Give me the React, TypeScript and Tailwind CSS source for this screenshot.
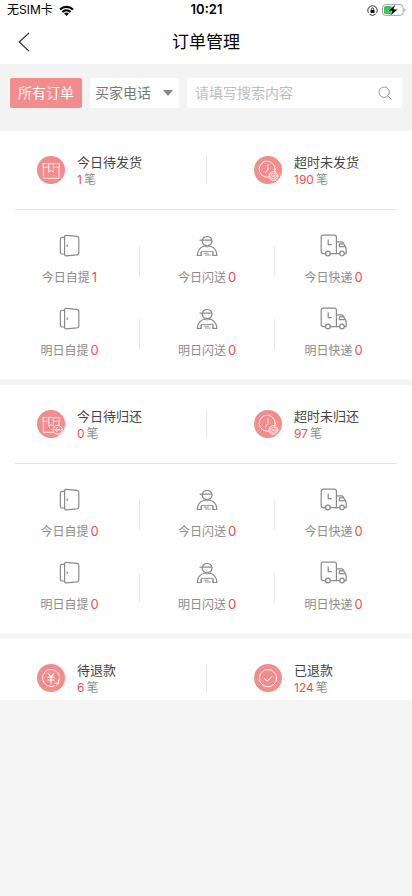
import { useState } from "react";
import type { ReactNode } from "react";

type Summary = { icon: ReactNode; title: string; count: number };
type Delivery = { kind: "door" | "courier" | "truck"; label: string; count: number };

/* 粉色圆底图标 */
function Disc({ children }: { children: ReactNode }) {
  return (
    <svg viewBox="0 0 28 28" className="size-7 shrink-0" fill="none" stroke="#fff" strokeWidth="0.9" strokeLinecap="round" strokeLinejoin="round" aria-hidden="true">
      <circle cx="14" cy="14" r="14" fill="#f38c8c" stroke="none" />
      {children}
    </svg>
  );
}

function BoxIcon() {
  return (
    <Disc>
      <path d="M6.5 7.6h15.4M6.1 11V7.6M22.3 11V7.6M6 11.3h5.8M16.4 11.3h6M6.4 11.3v11h15.6v-11" />
      <path d="M11.8 7.6v8.6l2.3-1.7 2.3 1.7V7.6" />
    </Disc>
  );
}

function BoxReturnIcon() {
  return (
    <Disc>
      <path d="M6.5 7.6h15.4M6.1 11V7.6M22.3 11V7.6M6 11.3h5.8M16.4 11.3h6M6.4 11.3v11h9.6M22 11.3v3.8" />
      <path d="M11.8 7.6v8.6l2.3-1.7 2.3 1.7V7.6" />
      <circle cx="20.7" cy="19.8" r="4.5" fill="#f38c8c" />
      <path d="M23.2 19.8h-5M20.2 17.7l-2.1 2.1 2.1 2.1" />
    </Disc>
  );
}

function ClockIcon() {
  return (
    <Disc>
      <circle cx="13.2" cy="13.2" r="8" />
      <path d="M13.9 8.6v4.7l-2.3 3.2" />
      <circle cx="19.5" cy="20" r="4.4" fill="#f38c8c" />
      <circle cx="19.5" cy="20" r="2.9" strokeWidth="0.6" />
      <path d="M18.2 18.7l2.6 2.6M20.8 18.7l-2.6 2.6" />
    </Disc>
  );
}

function YuanIcon() {
  return (
    <Disc>
      <path d="M17.6 21.9A8.6 8.6 0 1 1 22.4 16.2" />
      <path d="M17.4 19.2h4.2v-3.4M21.6 19.2l-2.2 2.2" />
      <path d="M11.2 9.4l2.8 3.8 2.8-3.8M14 13.2v5.9M10.9 13.3h6.2M10.9 16h6.2" strokeWidth="1.1" />
    </Disc>
  );
}

function CheckIcon() {
  return (
    <Disc>
      <circle cx="14" cy="14.2" r="8.6" />
      <path d="M10.3 14.4l3 2.8 4.8-5" />
    </Disc>
  );
}

function DeliveryIcon({ kind }: { kind: Delivery["kind"] }) {
  return (
    <svg viewBox="0 0 28 24" className="h-6 w-7" fill="none" stroke="#8a8a8a" strokeWidth="1.2" strokeLinecap="round" strokeLinejoin="round" aria-hidden="true">
      {kind === "door" && (
        <>
          <path d="M10.2 1.4l10.8.9q1.8.2 1.8 2v14.6q0 1.8-1.8 2l-10.8.9q-1.6.1-1.6-1.5V2.9q0-1.6 1.6-1.5z" />
          <path d="M8.4 3.4H6q-1.6 0-1.6 1.6v13.4q0 1.6 1.6 1.6h2.4M11.2 10.8v1.6" />
        </>
      )}
      {kind === "courier" && (
        <>
          <path d="M9.2 6.5a5 5 0 0 1 9.8 0v1.2a5 5 0 0 1-9.8 0zM9.2 6.2H7M9.2 6.2h9.6" />
          <path d="M10.8 12.3C6.8 13.6 4.4 16.8 4.3 21.5h3.9v-3M17.4 12.3c4 1.3 6.4 4.5 6.5 9.2H20v-3" />
          <path d="M10.8 12.3q3.3 1.5 6.6 0M8.2 21.5v-4.1h11.7v4.1M11.2 19.2h4M12.4 21h5" strokeWidth="0.9" />
        </>
      )}
      {kind === "truck" && (
        <>
          <path d="M5.7 19.6H3.2q-2 0-2-2V3.2q0-2 2-2h11.2q2 0 2 2v16.4H10.1" />
          <path d="M16.4 7.8h5.2q1.1 0 1.6 1l2.2 4.1q.8 1.2.8 2.4v4.3h-2M19.8 19.6h-3.4M24.6 12.7h-5.2V9.9h3.4" />
          <path d="M8.2 5.8v4.8h3.2" />
          <circle cx="7.9" cy="19.5" r="2.4" />
          <circle cx="22" cy="19.5" r="2.3" />
        </>
      )}
    </svg>
  );
}

const deliveries: Delivery[] = [
  { kind: "door", label: "今日自提", count: 0 },
  { kind: "courier", label: "今日闪送", count: 0 },
  { kind: "truck", label: "今日快递", count: 0 },
  { kind: "door", label: "明日自提", count: 0 },
  { kind: "courier", label: "明日闪送", count: 0 },
  { kind: "truck", label: "明日快递", count: 0 },
];

function StatusBar() {
  return (
    <div className="flex h-5 items-center bg-white text-xs text-black">
      <div className="flex flex-1 items-center gap-1.5 pl-[7px]">
        <span>无SIM卡</span>
        <svg viewBox="0 0 15 11" className="h-[11px] w-[15px]" aria-hidden="true">
          <path d="M.3 3.7a10.3 10.3 0 0 1 14.4 0l-1.5 1.5a8.2 8.2 0 0 0-11.4 0zM2.7 6.2a6.9 6.9 0 0 1 9.6 0l-1.5 1.5a4.8 4.8 0 0 0-6.6 0zM5.1 8.6a3.4 3.4 0 0 1 4.8 0L7.5 11z" />
        </svg>
      </div>
      <span className="text-[13px] font-semibold">10:21</span>
      <div className="flex flex-1 items-center justify-end gap-1 pr-1.5">
        <svg viewBox="0 0 11 11" className="size-[11px]" fill="none" stroke="#111" aria-hidden="true">
          <path d="M1.4 7.8A4.7 4.7 0 1 1 9.6 7.8M2.5 9.2a4.7 4.7 0 0 0 6 0" strokeWidth="0.9" />
          <path d="M4.3 5.2V4.1a1.2 1.2 0 0 1 2.4 0v1.1" strokeWidth="0.8" />
          <rect x="3.5" y="5" width="4" height="3" rx="0.5" fill="#111" stroke="none" />
        </svg>
        <svg viewBox="0 0 24 12" className="h-3 w-6" aria-hidden="true">
          <rect x="0.5" y="0.6" width="20.6" height="10.8" rx="3" fill="#fff" stroke="#a5a5a5" />
          <path d="M22.3 4.3v3.4q1.3-.4 1.3-1.7t-1.3-1.7z" fill="#a5a5a5" />
          <rect x="2" y="2.1" width="8" height="7.8" rx="1.5" fill="#34c759" />
          <path d="M13.6.3L6 6.9h4.2L8.3 11.8l7.7-6.6h-4.3z" fill="#000" stroke="#fff" strokeWidth="0.4" />
        </svg>
      </div>
    </div>
  );
}

function FilterBar() {
  const [field, setField] = useState("phone");
  const [keyword, setKeyword] = useState("");

  return (
    <form className="flex gap-2 bg-[#f3f3f3] px-2.5 pt-3.5 pb-[23px] text-sm" onSubmit={(e) => e.preventDefault()}>
      <button type="button" className="h-[30px] w-[72px] shrink-0 rounded-xs bg-[#f38c8c] text-white">
        所有订单
      </button>
      <div className="relative w-[89px] shrink-0">
        <select
          aria-label="搜索类型"
          value={field}
          onChange={(e) => setField(e.target.value)}
          className="h-[30px] w-full appearance-none rounded-xs bg-white pl-[5px] text-[#777] outline-none"
        >
          <option value="phone">买家电话</option>
          <option value="name">买家姓名</option>
          <option value="order">订单编号</option>
        </select>
        <svg viewBox="0 0 10 6" className="pointer-events-none absolute top-3 right-1.5 h-1.5 w-2.5" aria-hidden="true">
          <path d="M0 0h10L5 6z" fill="#888" />
        </svg>
      </div>
      <div className="flex h-[30px] min-w-0 flex-1 items-center rounded-xs bg-white pr-2.5 pl-2">
        <input
          type="text"
          aria-label="搜索内容"
          placeholder="请填写搜索内容"
          value={keyword}
          onChange={(e) => setKeyword(e.target.value)}
          className="min-w-0 flex-1 bg-transparent text-[#555] outline-none placeholder:text-[#bdbdbd]"
        />
        <button type="submit" aria-label="搜索">
          <svg viewBox="0 0 14 14" className="size-3.5" fill="none" stroke="#999" strokeLinecap="round" aria-hidden="true">
            <circle cx="6.2" cy="6.2" r="5.2" />
            <path d="M10 10l3.3 3.2" />
          </svg>
        </button>
      </div>
    </form>
  );
}

function SummaryRow({ left, right }: { left: Summary; right: Summary }) {
  return (
    <div className="grid grid-cols-2 items-center pt-[21px]">
      <SummaryItem {...left} />
      <div className="flex items-center">
        <div className="h-7 w-px bg-[#e8e8e8]" />
        <div className="pl-2.5">
          <SummaryItem {...right} />
        </div>
      </div>
    </div>
  );
}

function SummaryItem({ icon, title, count }: Summary) {
  return (
    <div className="flex items-center gap-3 pl-[37px]">
      {icon}
      <div>
        <h2 className="text-[13px] leading-5 text-[#444]">{title}</h2>
        <p className="flex gap-0.5 text-xs leading-4 text-[#8c8c8c]">
          <span className="text-[#f05050]">{count}</span>
          <span>笔</span>
        </p>
      </div>
    </div>
  );
}

function DeliveryGrid({ items }: { items: Delivery[] }) {
  return (
    <div className="grid grid-cols-[139fr_135fr_118fr] gap-y-5 pt-6 pr-5 pb-[19px]">
      {items.map((item, i) => (
        <div key={item.label} className="flex items-center">
          {i % 3 !== 0 && <div className="h-[30px] w-px bg-[#e8e8e8]" />}
          <div className="flex flex-1 flex-col items-center gap-[9px]">
            <DeliveryIcon kind={item.kind} />
            <p className="h-5 text-xs leading-5 text-[#8c8c8c]">
              {item.label}
              <span className="ml-0.5 text-[13px] leading-5 text-[#f05050]">{item.count}</span>
            </p>
          </div>
        </div>
      ))}
    </div>
  );
}

export default function App() {
  const today = deliveries.map((d, i) => (i === 0 ? { ...d, count: 1 } : d));

  return (
    <div className="min-h-screen bg-[#f5f5f5] font-['Inter','Noto_Sans_CJK_SC',sans-serif]">
      <StatusBar />
      <header className="grid h-11 grid-cols-[1fr_auto_1fr] items-center bg-white">
        <button type="button" aria-label="返回" className="w-fit pl-[18px]">
          <svg viewBox="0 0 12 20" className="h-5 w-3" fill="none" stroke="#222" strokeWidth="1.1" aria-hidden="true">
            <path d="M11 .8L1.2 10 11 19.2" />
          </svg>
        </button>
        <h1 className="pt-0.5 text-[17px] text-black">订单管理</h1>
      </header>
      <FilterBar />
      <main className="flex flex-col gap-1.5">
        <section className="bg-white">
          <SummaryRow
            left={{ icon: <BoxIcon />, title: "今日待发货", count: 1 }}
            right={{ icon: <ClockIcon />, title: "超时未发货", count: 190 }}
          />
          <hr className="mx-[15px] mt-[21px] border-[#e4e4e4]" />
          <DeliveryGrid items={today} />
        </section>
        <section className="bg-white">
          <SummaryRow
            left={{ icon: <BoxReturnIcon />, title: "今日待归还", count: 0 }}
            right={{ icon: <ClockIcon />, title: "超时未归还", count: 97 }}
          />
          <hr className="mx-[15px] mt-[21px] border-[#e4e4e4]" />
          <DeliveryGrid items={deliveries} />
        </section>
        <section className="bg-white pb-1">
          <SummaryRow
            left={{ icon: <YuanIcon />, title: "待退款", count: 6 }}
            right={{ icon: <CheckIcon />, title: "已退款", count: 124 }}
          />
        </section>
      </main>
    </div>
  );
}
